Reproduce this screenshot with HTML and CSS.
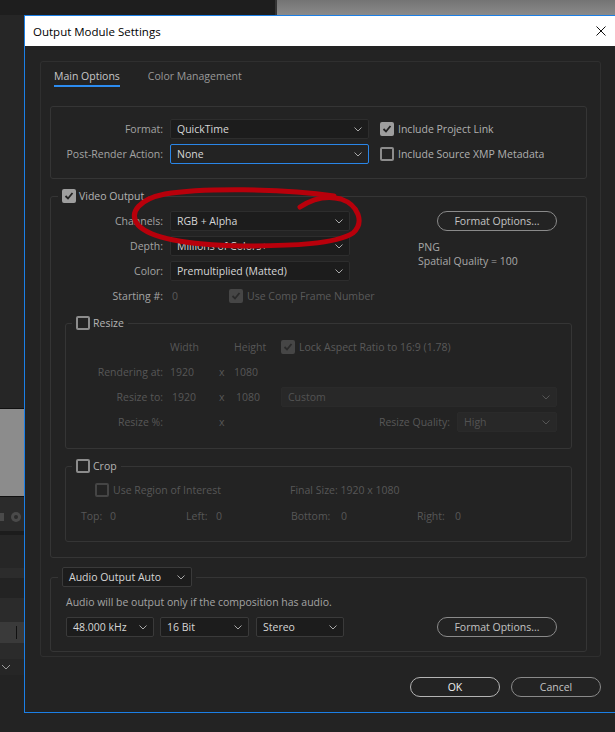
FILE: index.html
```html
<!DOCTYPE html>
<html>
<head>
<meta charset="utf-8">
<title>Output Module Settings</title>
<link rel="stylesheet" href="styles.css">
</head>
<body>
<div class="desktop">
  <div class="top-strip"><div class="top-dark"></div><div class="top-gray"></div></div>
  <div class="main">
    <div class="side">
      <div class="sd sd-a"></div>
      <div class="sd sd-line"></div>
      <div class="sd sd-gray"></div>
      <div class="sd sd-line"></div>
      <div class="sd sd-tool">
        <svg width="24" height="16" viewBox="0 0 24 16"><rect x="0" y="5" width="4" height="8" fill="#4a4a4a"/><circle cx="16" cy="9" r="5" fill="#4a4a4a"/><circle cx="16" cy="9" r="2" fill="#2b2b2b"/></svg>
      </div>
      <div class="sd sd-b"></div>
      <div class="sd sd-c"></div>
      <div class="sd sd-d"></div>
      <div class="sd sd-e"></div>
      <div class="sd sd-f"></div>
      <div class="sd sd-row"><span class="row-bar"></span></div>
      <div class="sd sd-g"></div>
      <div class="sd sd-h"><svg width="10" height="6" viewBox="0 0 10 6"><path d="M1 1 L5 5 L9 1" fill="none" stroke="#9a9a9a" stroke-width="1"/></svg></div>
      <div class="sd sd-rest"></div>
    </div>
    <div class="dialog-col">
      <div class="dialog">
        <div class="titlebar">
          <span class="title">Output Module Settings</span>
          <svg class="close" width="10" height="10" viewBox="0 0 10 10"><path d="M0.5 0.5 L9.5 9.5 M9.5 0.5 L0.5 9.5" stroke="#111" stroke-width="1"/></svg>
        </div>
        <div class="dbody">
          <div class="panel">
            <div class="tabs">
              <span class="tab active">Main Options</span>
              <span class="tab">Color Management</span>
            </div>

            <div class="group fmt">
              <div class="frow">
                <span class="lbl">Format:</span>
                <div class="sel w199"><span>QuickTime</span><svg class="chev" width="8" height="5" viewBox="0 0 8 5"><path d="M0.5 0.5 L4 4 L7.5 0.5"/></svg></div>
                <span class="chk"><span class="cb on"><svg width="10" height="10" viewBox="0 0 10 10"><path d="M1.5 5 L4 7.5 L8.5 2"/></svg></span>Include Project Link</span>
              </div>
              <div class="frow">
                <span class="lbl">Post-Render Action:</span>
                <div class="sel w199 focus"><span>None</span><svg class="chev" width="8" height="5" viewBox="0 0 8 5"><path d="M0.5 0.5 L4 4 L7.5 0.5"/></svg></div>
                <span class="chk"><span class="cb"></span>Include Source XMP Metadata</span>
              </div>
            </div>

            <fieldset class="fs video">
              <legend class="lg-video"><span class="lg"><span class="cb on"><svg width="10" height="10" viewBox="0 0 10 10"><path d="M1.5 5 L4 7.5 L8.5 2"/></svg></span>Video Output</span></legend>
              <div class="vtop">
                <div class="vleft">
                  <div class="vrow"><span class="lbl">Channels:</span><div class="sel w180"><span>RGB + Alpha</span><svg class="chev" width="8" height="5" viewBox="0 0 8 5"><path d="M0.5 0.5 L4 4 L7.5 0.5"/></svg></div></div>
                  <div class="vrow"><span class="lbl">Depth:</span><div class="sel w180"><span>Millions of Colors+</span><svg class="chev" width="8" height="5" viewBox="0 0 8 5"><path d="M0.5 0.5 L4 4 L7.5 0.5"/></svg></div></div>
                  <div class="vrow"><span class="lbl">Color:</span><div class="sel w180"><span>Premultiplied (Matted)</span><svg class="chev" width="8" height="5" viewBox="0 0 8 5"><path d="M0.5 0.5 L4 4 L7.5 0.5"/></svg></div></div>
                  <div class="vrow"><span class="lbl">Starting #:</span><span class="startval">0</span><span class="chk dis"><span class="cb on dis"><svg width="10" height="10" viewBox="0 0 10 10"><path d="M1.5 5 L4 7.5 L8.5 2"/></svg></span>Use Comp Frame Number</span></div>
                </div>
                <div class="vright">
                  <button class="btn fo">Format Options...</button>
                  <div class="info">PNG<br>Spatial Quality = 100</div>
                </div>
              </div>

              <fieldset class="fs sub resize">
                <legend class="lg-sub"><span class="lg"><span class="cb"></span>Resize</span></legend>
                <div class="rgrid">
                  <span></span><span class="c2">Width</span><span></span><span class="c4">Height</span>
                  <span class="chk dis"><span class="cb on dis"><svg width="10" height="10" viewBox="0 0 10 10"><path d="M1.5 5 L4 7.5 L8.5 2"/></svg></span>Lock Aspect Ratio to 16:9 (1.78)</span>

                  <span class="c1">Rendering at:</span><span class="c2">1920</span><span class="cx">x</span><span class="c4">1080</span><span></span>

                  <span class="c1">Resize to:</span><span class="c2 p8">1920</span><span class="cx">x</span><span class="c4 p2">1080</span>
                  <div class="sel dsel"><span>Custom</span><svg class="chev" width="8" height="5" viewBox="0 0 8 5"><path d="M0.5 0.5 L4 4 L7.5 0.5"/></svg></div>

                  <span class="c1">Resize %:</span><span></span><span class="cx">x</span><span></span>
                  <div class="rq"><span>Resize Quality:</span><div class="sel dsel w100"><span>High</span><svg class="chev" width="8" height="5" viewBox="0 0 8 5"><path d="M0.5 0.5 L4 4 L7.5 0.5"/></svg></div></div>
                </div>
              </fieldset>

              <fieldset class="fs sub crop">
                <legend class="lg-sub"><span class="lg"><span class="cb"></span>Crop</span></legend>
                <div class="crow1">
                  <span class="roi"><span class="cb dis"></span>Use Region of Interest</span>
                  <span>Final Size: 1920 x 1080</span>
                </div>
                <div class="crow2">
                  <span>Top:</span><span>0</span><span>Left:</span><span>0</span><span>Bottom:</span><span>0</span><span>Right:</span><span>0</span>
                </div>
              </fieldset>
            </fieldset>

            <fieldset class="fs audio">
              <legend class="lg-audio"><div class="sel w130 asel"><span>Audio Output Auto</span><svg class="chev" width="8" height="5" viewBox="0 0 8 5"><path d="M0.5 0.5 L4 4 L7.5 0.5"/></svg></div></legend>
              <div class="anote">Audio will be output only if the composition has audio.</div>
              <div class="arow">
                <div class="sel asel w88"><span>48.000 kHz</span><svg class="chev" width="8" height="5" viewBox="0 0 8 5"><path d="M0.5 0.5 L4 4 L7.5 0.5"/></svg></div>
                <div class="sel asel w89"><span>16 Bit</span><svg class="chev" width="8" height="5" viewBox="0 0 8 5"><path d="M0.5 0.5 L4 4 L7.5 0.5"/></svg></div>
                <div class="sel asel w88b"><span>Stereo</span><svg class="chev" width="8" height="5" viewBox="0 0 8 5"><path d="M0.5 0.5 L4 4 L7.5 0.5"/></svg></div>
                <button class="btn fo afo">Format Options...</button>
              </div>
            </fieldset>
          </div>
          <div class="btns">
            <button class="btn ok">OK</button>
            <button class="btn">Cancel</button>
          </div>
        </div>
      </div>
    </div>
  </div>
  <svg class="annot" width="615" height="732" viewBox="0 0 615 732">
    <path d="M300 207 C312 199 326 195 341 199 C358 205 365 222 353 233 C336 244 292 246 242 246 C192 245 151 239 138 225 C128 212 140 199 165 194 C200 188 282 188 334 196" fill="none" stroke="#b8000b" stroke-width="5" stroke-linecap="round" stroke-linejoin="round"/>
  </svg>
</div>
</body>
</html>
```

FILE: styles.css
```css
* { box-sizing: border-box; }
html, body { margin: 0; padding: 0; }
body {
  background: #232323;
  font-family: "Open Sans", "Noto Sans", sans-serif;
  font-size: 10.5px;
  color: #a6a6a6;
}
.desktop { width: 615px; height: 732px; overflow: hidden; position: relative; }

.top-strip { display: flex; height: 15px; }
.top-dark { width: 277px; background: #1e1e1e; border-right: 2px solid #353535; }
.top-gray { flex: 1; background: linear-gradient(#747474, #8a8a8a); }

.main { display: flex; height: 717px; }
.side { width: 24px; flex: none; display: flex; flex-direction: column; overflow: hidden; }
.sd { width: 24px; flex: none; }
.sd-a { height: 393px; background: #262626; }
.sd-line { height: 1px; background: #101010; }
.sd-gray { height: 87px; background: #8c8c8c; }
.sd-tool { height: 34px; background: #2b2b2b; display: flex; align-items: center; padding-top: 4px; }
.sd-b { height: 4px; background: #1c1c1c; }
.sd-c { height: 33px; background: #262626; }
.sd-d { height: 10px; background: #2c2c2c; }
.sd-e { height: 20px; background: #232323; }
.sd-f { height: 24px; background: #2b2b2b; }
.sd-row { height: 21px; background: #3a3a3a; position: relative; }
.row-bar { position: absolute; left: 16px; top: 4px; width: 1px; height: 13px; background: #111; }
.sd-g { height: 16px; background: #2b2b2b; }
.sd-h { height: 16px; background: #262626; display: flex; align-items: center; padding-left: 1px; }
.sd-rest { flex: 1; background: #232323; }

.dialog-col { width: 592px; flex: none; background: #232323; }
.dialog {
  height: 698px;
  border: 1px solid #1b7fe6;
  background: #232323;
  display: flex;
  flex-direction: column;
}
.titlebar {
  height: 30px;
  flex: none;
  background: #ffffff;
  display: flex;
  align-items: center;
  padding-left: 8px;
}
.title { font-size: 11.5px; color: #000; }
.close { margin-left: auto; margin-right: 9px; }

.dbody { padding: 15px 0 0 15px; }
.panel {
  width: 561px;
  height: 596px;
  border: 1px solid #2f2f2f;
  border-radius: 3px;
}
.tabs { display: flex; gap: 28px; padding: 6px 0 0 13px; }
.tab { line-height: 16px; padding-bottom: 1px; border-bottom: 2px solid transparent; color: #999; font-size: 10.5px; }
.tab.active { border-bottom-color: #2c8cf0; color: #c8c8c8; }

.group {
  margin: 19px 13px 0 9px;
  border: 1px solid #353535;
  border-radius: 3px;
  padding: 12px 0 14px;
  display: flex;
  flex-direction: column;
  gap: 5px;
}
.frow, .vrow { display: flex; align-items: center; height: 20px; }
.lbl { width: 112px; flex: none; text-align: right; margin-right: 7px; color: #a3a3a3; white-space: nowrap; }

.sel {
  height: 20px;
  flex: none;
  background: #1c1c1c;
  border: 1px solid #2d2d2d;
  border-radius: 2px;
  display: flex;
  align-items: center;
  justify-content: space-between;
  padding: 0 6px 0 6px;
  color: #d6d6d6;
  white-space: nowrap;
}
.sel .chev { fill: none; stroke: #a8a8a8; stroke-width: 1; flex: none; }
.sel.focus { border-color: #2a86e8; background: #232323; }
.w199 { width: 199px; }
.w180 { width: 180px; }
.w130 { width: 130px; }
.w100 { width: 100px; }
.w88 { width: 88px; }
.w89 { width: 89px; margin-left: 6px; }
.w88b { width: 88px; margin-left: 7px; }
.dsel { background: #282828; border-color: #2a2a2a; color: #535353; }
.dsel .chev { stroke: #555; }
.asel { border-color: #3a3a3a; background: #1c1c1c; }

.chk { display: flex; align-items: center; gap: 4px; color: #b0b0b0; white-space: nowrap; }
.frow .chk { margin-left: 11px; }
.chk.dis { color: #5a5a5a; }

.cb {
  width: 14px;
  height: 14px;
  flex: none;
  border: 2px solid #8c8c8c;
  border-radius: 2px;
  display: flex;
  align-items: center;
  justify-content: center;
}
.cb svg { fill: none; stroke: #222; stroke-width: 1.8; }
.cb.on { background: #9e9e9e; border-color: #9e9e9e; }
.cb.dis { border-color: #454545; }
.cb.on.dis { background: #464646; border-color: #464646; }
.cb.on.dis svg { stroke: #2a2a2a; }

.fs { margin: 0; padding: 0; border: 1px solid #353535; border-radius: 3px; min-width: 0; }
legend { padding: 0 4px; }
.lg { display: flex; align-items: center; gap: 3px; height: 14px; color: #b3b3b3; white-space: nowrap; }
.lg-video { margin-left: 7px; }
.lg-sub { margin-left: 6px; }
.lg-audio { margin-left: 7px; }

.video { margin: 10px 13px 0 9px; padding: 0 0 15px 0; }
.vtop { display: flex; padding-top: 8px; }
.vleft { width: 299px; flex: none; display: flex; flex-direction: column; gap: 5px; }
.startval { width: 59px; flex: none; padding-left: 2px; color: #5a5a5a; }
.vright { margin-left: 68px; }
.btn {
  height: 20px;
  border: 1px solid #8a8a8a;
  border-radius: 10px;
  background: transparent;
  color: #c4c4c4;
  font-family: "Open Sans", "Noto Sans", sans-serif;
  font-size: 10.5px;
  padding: 0;
  display: flex;
  align-items: center;
  justify-content: center;
}
.fo { width: 120px; margin-left: 19px; }
.info { margin-top: 9px; line-height: 14px; color: #a8a8a8; }

.sub { margin: 10px 14px 0 14px; }
.resize { padding: 7px 0 16px 0; }
.rgrid {
  display: grid;
  grid-template-columns: 98px 55px 15px 47px 276px;
  grid-auto-rows: 20px;
  row-gap: 5px;
  align-items: center;
  color: #575757;
  white-space: nowrap;
}
.c1 { text-align: right; padding-right: 1px; }
.c2 { padding-left: 6px; }
.c2.p8 { padding-left: 8px; }
.c4.p2 { padding-left: 2px; }
.rq { display: flex; align-items: center; justify-content: flex-end; gap: 7px; }

.crop { padding: 7px 0 15px 0; }
.crow1 { display: flex; align-items: center; height: 20px; padding-left: 29px; color: #575757; white-space: nowrap; }
.roi { width: 195px; flex: none; display: flex; align-items: center; gap: 4px; }
.crow2 {
  display: grid;
  grid-template-columns: 29px 76px 30px 75px 50px 76px 38px auto;
  height: 20px;
  align-items: center;
  margin-top: 6px;
  padding-left: 15px;
  color: #575757;
}

.audio { margin: 9px 13px 3px 9px; padding: 8px 0 14px 0; }
.anote { line-height: 14px; color: #a3a3a3; margin-left: 15px; }
.arow { display: flex; align-items: center; margin-top: 8px; margin-left: 15px; }
.afo { margin-left: 93px; }

.btns { width: 561px; display: flex; justify-content: flex-end; gap: 11px; margin-top: 20px; }
.btns .btn { width: 90px; }
.btn.ok { border-color: #b4b4b4; color: #f0f0f0; }

.annot { position: absolute; left: 0; top: 0; pointer-events: none; }
```
